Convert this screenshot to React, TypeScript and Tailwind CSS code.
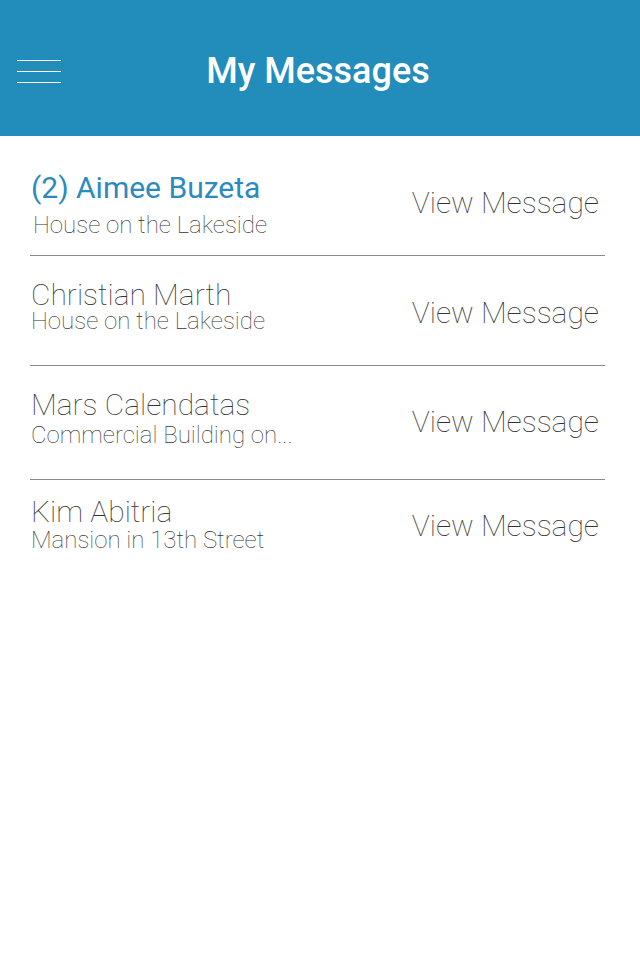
const messages = [
  { name: "(2) Aimee Buzeta", subject: "House on the Lakeside", unread: true, pt: "pt-[38px]", gap: "mt-[13px]", pb: "pb-[20px]", vm: "mt-[15px]", sub: "pl-[2px]" },
  { name: "Christian Marth", subject: "House on the Lakeside", unread: false, pt: "pt-[25px]", gap: "mt-[2px]", pb: "pb-[34px]", vm: "mt-[18px]", sub: "" },
  { name: "Mars Calendatas", subject: "Commercial Building on...", unread: false, pt: "pt-[25px]", gap: "mt-[6px]", pb: "pb-[34px]", vm: "mt-[17px]", sub: "" },
  { name: "Kim Abitria", subject: "Mansion in 13th Street", unread: false, pt: "pt-[18px]", gap: "mt-[4px]", pb: "pb-[20px]", vm: "mt-[14px]", sub: "pl-0" },
];

export default function App() {
  return (
    <div className="w-[640px] h-[960px] bg-white font-['Roboto',sans-serif]">
      <header className="relative h-[136px] bg-[#228dbb] flex items-center justify-center">
        <button className="absolute left-[17px] top-[60px] flex flex-col gap-[10px]">
          <span className="block w-[44px] h-px bg-white" />
          <span className="block w-[44px] h-px bg-white" />
          <span className="block w-[44px] h-px bg-white" />
        </button>
        <h1 className="text-white text-[36px] font-medium leading-[40px] ml-[-4px] mt-[6px]">My Messages</h1>
      </header>

      <ul>
        {messages.map((m, i) => (
          <li key={m.name}>
            <div className={`flex items-start justify-between pl-[31px] pr-[41px] ${m.pt} ${m.pb}`}>
              <div>
                <div
                  className={
                    m.unread
                      ? "text-[30px] leading-[28px] text-[#2a8bbf] font-normal"
                      : "text-[30px] leading-[28px] text-[#333333] font-thin"
                  }
                >
                  {m.name}
                </div>
                <div className={`text-[24px] leading-[20px] text-[#333333] font-thin ${m.gap} ${m.sub}`}>
                  {m.subject}
                </div>
              </div>
              <div className={`text-[30px] leading-[28px] text-[#333333] font-thin ${m.vm}`}>
                View Message
              </div>
            </div>
            {i < messages.length - 1 && <div className="ml-[30px] mr-[35px] h-px bg-[#8a8a8a]" />}
          </li>
        ))}
      </ul>
    </div>
  );
}
